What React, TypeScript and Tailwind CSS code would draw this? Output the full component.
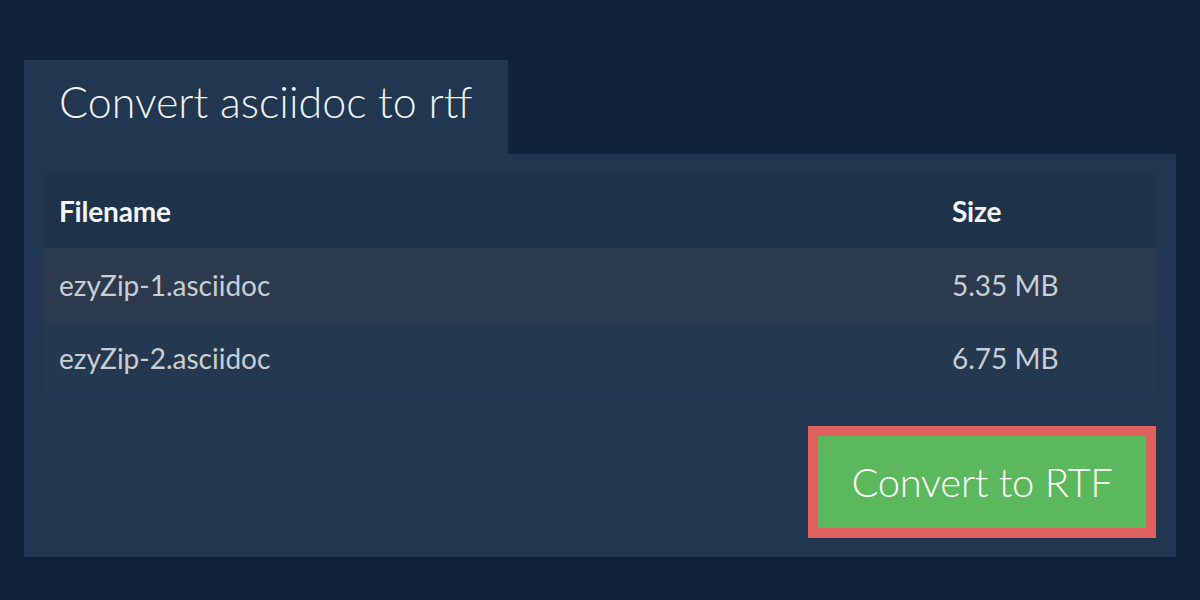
export default function App() {
  const files = [
    { name: 'ezyZip-1.asciidoc', size: '5.35 MB' },
    { name: 'ezyZip-2.asciidoc', size: '6.75 MB' },
  ];

  return (
    <div
      className="h-[600px] w-[1200px] bg-[#10233a] px-[24px] pt-[60px]"
      style={{ fontFamily: 'Lato, "Open Sans", sans-serif' }}
    >
      <div className="flex h-[94px] w-[484px] items-center bg-[#21364f] pb-[12px] pl-[35px]">
        <h1 className="text-[43px] font-light leading-none text-[#eef0f2]">Convert asciidoc to rtf</h1>
      </div>

      <div className="flex h-[403px] flex-col bg-[#21364f] px-[20px] pt-[20px]">
        <div className="w-full">
          <div className="flex h-[74px] items-center bg-[#1e3249] text-[28px] font-bold tracking-[-0.2px] text-[#f2f4f6]">
            <div className="w-[908px] pl-[15px]">Filename</div>
            <div>Size</div>
          </div>
          {files.map((f, i) => (
            <div
              key={f.name}
              className={`flex items-center text-[28px] text-[#c9ced4] ${
                i === 0 ? 'h-[74px] bg-[#2b3a4c]' : 'h-[72px] bg-[#243950]'
              }`}
            >
              <div className="w-[908px] pl-[15px]">{f.name}</div>
              <div>{f.size}</div>
            </div>
          ))}
        </div>

        <div className="mt-[32px] flex justify-end">
          <button className="flex h-[112px] w-[348px] items-center justify-center border-[10px] border-[#de615e] bg-[#5cb85c] text-[40px] font-light tracking-[-0.3px] text-white">
            Convert to RTF
          </button>
        </div>
      </div>
    </div>
  );
}
